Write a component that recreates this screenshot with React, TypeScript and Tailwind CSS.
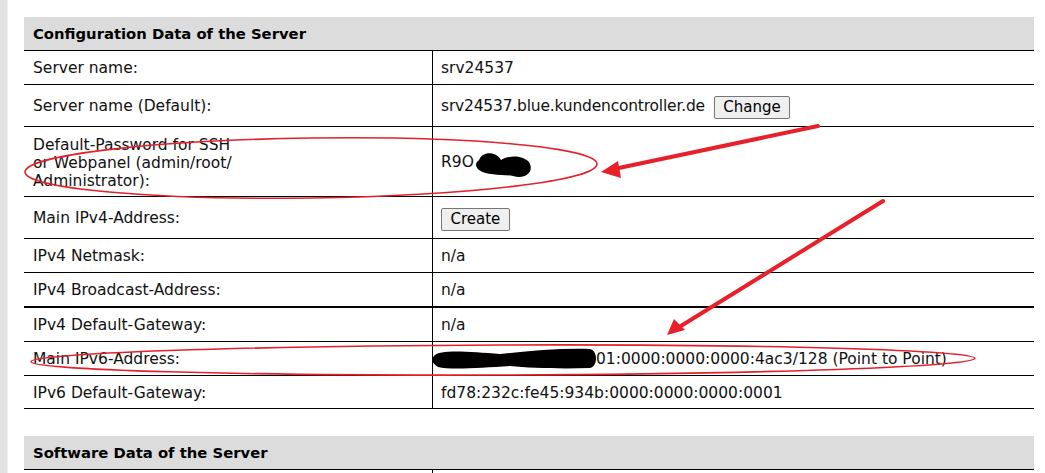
import React from "react";

type Row = { label: React.ReactNode; value: React.ReactNode; h: string; thick?: boolean };

const Btn = ({ children }: { children: React.ReactNode }) => (
  <span className="inline-flex h-[23px] items-center rounded-[2px] border border-[#767676] bg-[#efefef] px-[8.5px] text-[15px] leading-none text-black">
    {children}
  </span>
);

const rows: Row[] = [
  { label: "Server name:", value: "srv24537", h: "h-[34px]" },
  {
    label: "Server name (Default):",
    value: (
      <span className="flex items-center gap-[9px]">
        <span className="tracking-[-0.2px]">srv24537.blue.kundencontroller.de</span>
        <Btn>Change</Btn>
      </span>
    ),
    h: "h-[42px]",
  },
  {
    label: (
      <span className="block leading-[18px]">
        Default-Password for SSH
        <br />
        or Webpanel (admin/root/
        <br />
        Administrator):
      </span>
    ),
    value: "R9O",
    h: "h-[70px]",
  },
  { label: "Main IPv4-Address:", value: <Btn>Create</Btn>, h: "h-[42px]" },
  { label: "IPv4 Netmask:", value: "n/a", h: "h-[34px]" },
  { label: "IPv4 Broadcast-Address:", value: "n/a", h: "h-[35px]", thick: true },
  { label: "IPv4 Default-Gateway:", value: "n/a", h: "h-[34px]" },
  {
    label: "Main IPv6-Address:",
    value: (
      <span className="block pl-[155px]">01:0000:0000:0000:4ac3/128 (Point to Point)</span>
    ),
    h: "h-[34px]",
  },
  { label: "IPv6 Default-Gateway:", value: "fd78:232c:fe45:934b:0000:0000:0000:0001", h: "h-[33px]" },
];

export default function App() {
  return (
    <div
      className="relative flex h-[473px] w-[1045px] overflow-hidden bg-white text-[15.5px] text-[#111]"
      style={{ fontFamily: '"DejaVu Sans", Verdana, sans-serif' }}
    >
      <div className="h-full w-[7px] bg-[#e3e3e3]" />
      <div className="h-full w-[1px] bg-[#f0f0f0]" />
      <div className="flex flex-col pl-[16px] pt-[17px]">
        <div className="w-[1010px]">
          <div className="flex h-[34px] items-center border-b border-black bg-[#dcdcdc] pl-[9px] pt-[2px] text-[14.8px] font-bold text-black">
            Configuration Data of the Server
          </div>
          {rows.map((r, i) => (
            <div
              key={i}
              className={`grid grid-cols-[409px_601px] ${r.h} ${r.thick ? "border-b-2" : "border-b"} border-black`}
            >
              <div className="flex items-center border-r border-black pl-[9px] pt-[3px]">{r.label}</div>
              <div className="flex items-center pl-[8px] pt-[3px]">{r.value}</div>
            </div>
          ))}
        </div>
        <div className="mt-[27px] w-[1010px]">
          <div className="flex h-[34px] items-center border-b border-black bg-[#dcdcdc] pl-[9px] pt-[2px] text-[14.8px] font-bold text-black">
            Software Data of the Server
          </div>
          <div className="grid h-[20px] grid-cols-[409px_601px]">
            <div className="border-r border-black" />
            <div />
          </div>
        </div>
      </div>

      <svg className="pointer-events-none absolute left-0 top-0" width="1045" height="473" viewBox="0 0 1045 473">
        <path d="M479 160 C483 150, 497 152, 501 160 C507 156, 521 154, 529 162 C535 172, 525 180, 513 176 C501 174, 487 176, 479 170 C475 166, 475 163, 479 160 Z" fill="#000" />
        <path d="M434 356 C440 349, 470 352, 500 354 C530 351, 560 348, 590 349 C598 351, 598 366, 590 368 C560 369, 530 368, 510 366 C480 368, 450 370, 438 367 C432 364, 431 359, 434 356 Z" fill="#000" />
        <ellipse cx="311" cy="168" rx="286" ry="30" fill="none" stroke="#e4212b" strokeWidth="1.6" transform="rotate(-0.8 311 168)" />
        <ellipse cx="503" cy="360" rx="472" ry="15" fill="none" stroke="#e4212b" strokeWidth="1.6" transform="rotate(-0.2 503 360)" />
        <line x1="818" y1="126" x2="614" y2="169" stroke="#e8202a" strokeWidth="4" strokeLinecap="round" />
        <polygon points="601,172 618,161 621,178" fill="#e8202a" />
        <line x1="883" y1="201" x2="676" y2="329" stroke="#e8202a" strokeWidth="4" strokeLinecap="round" />
        <polygon points="667,335 674,319 685,330" fill="#e8202a" />
      </svg>
    </div>
  );
}
